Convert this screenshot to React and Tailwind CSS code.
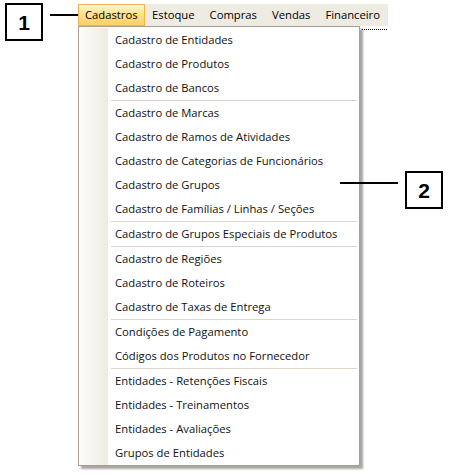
import React from "react";

const groups = [
  ["Cadastro de Entidades", "Cadastro de Produtos", "Cadastro de Bancos"],
  [
    "Cadastro de Marcas",
    "Cadastro de Ramos de Atividades",
    "Cadastro de Categorias de Funcionários",
    "Cadastro de Grupos",
    "Cadastro de Famílias / Linhas / Seções",
  ],
  ["Cadastro de Grupos Especiais de Produtos"],
  ["Cadastro de Regiões", "Cadastro de Roteiros", "Cadastro de Taxas de Entrega"],
  ["Condições de Pagamento", "Códigos dos Produtos no Fornecedor"],
  [
    "Entidades - Retenções Fiscais",
    "Entidades - Treinamentos",
    "Entidades - Avaliações",
    "Grupos de Entidades",
  ],
];

function Item({ label }) {
  return (
    <div className="flex h-[24px] items-center">
      <div className="h-full w-[29px] shrink-0 bg-gradient-to-r from-[#fdfdfb] to-[#eeebe2]" />
      <div className="pl-[7px] text-[11.25px] leading-none text-[#111]">{label}</div>
    </div>
  );
}

function Separator() {
  return (
    <div className="flex h-[1px]">
      <div className="h-full w-[29px] shrink-0 bg-gradient-to-r from-[#fdfdfb] to-[#eeebe2]" />
      <div className="ml-[3px] mr-[2px] h-full flex-1 bg-[#dcd6c8]" />
    </div>
  );
}

export default function App() {
  const top = ["Estoque", "Compras", "Vendas", "Financeiro"];
  return (
    <div
      className="relative h-[475px] w-[452px] overflow-hidden bg-white"
      style={{ fontFamily: '"Open Sans", "Noto Sans", sans-serif' }}
    >
      <div className="flex items-start pl-[5px] pt-[3px]">
        <div
          className="flex h-[38px] w-[38px] shrink-0 items-center justify-center border-2 border-black text-[21px] font-bold leading-none text-black"
          style={{ fontFamily: '"Liberation Sans", Arial, sans-serif' }}
        >
          1
        </div>
        <div className="ml-[7px] mt-[11px] h-[2px] w-[30px] shrink-0 bg-black" />
        <div className="relative -ml-[2px] mt-[1px] flex flex-col">
          {/* menu bar */}
          <div className="flex h-[22px] w-[310px] items-stretch bg-[#eeebe3]">
            <div className="flex items-center border border-[#f0b44c] bg-gradient-to-b from-[#fff4c8] via-[#ffe08a] to-[#ffcf66] px-[6px] text-[11.25px] text-black">
              Cadastros
            </div>
            {top.map((t) => (
              <div key={t} className="flex items-center px-[7.5px] text-[11.25px] text-black">
                {t}
              </div>
            ))}
          </div>
          <div className="flex items-start">
            {/* dropdown */}
            <div className="relative w-[282px] border border-[#a89f90] bg-white pt-[1px] shadow-[3px_3px_2px_rgba(0,0,0,0.35)]">
              {groups.map((g, gi) => (
                <React.Fragment key={gi}>
                  {gi > 0 && <Separator />}
                  {g.map((l) => (
                    <Item key={l} label={l} />
                  ))}
                </React.Fragment>
              ))}
            </div>
            <div className="ml-[2px] mt-[3px] w-[25px] border-t border-dotted border-black" />
          </div>
        </div>
      </div>

      {/* callout 2 */}
      <div className="absolute left-[340px] top-[182px] h-[2px] w-[58px] bg-black" />
      <div
        className="absolute left-[405px] top-[171px] flex h-[38px] w-[38px] items-center justify-center border-2 border-black text-[21px] font-bold leading-none text-black"
        style={{ fontFamily: '"Liberation Sans", Arial, sans-serif' }}
      >
        2
      </div>
    </div>
  );
}
